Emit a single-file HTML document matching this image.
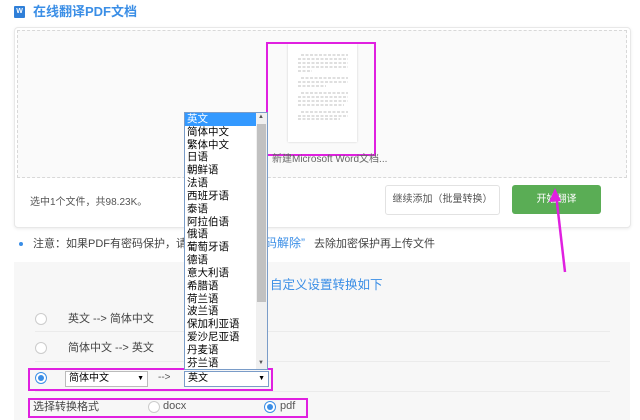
<!DOCTYPE html>
<html><head><meta charset="utf-8"><style>
*{margin:0;padding:0;box-sizing:border-box}
body{width:640px;height:420px;overflow:hidden;background:#fff;font-family:"Liberation Sans","Noto Sans CJK SC",sans-serif;position:relative;color:#333}
.a{position:absolute;white-space:nowrap}
.radio{position:absolute;width:12px;height:12px;border:1px solid #ccc;border-radius:50%;background:#fff}
.radio.on{border-color:#3a8ee6}
.radio.on::after{content:"";position:absolute;left:2px;top:2px;width:6px;height:6px;border-radius:50%;background:#3a8ee6}
.sel{position:absolute;height:16px;border:1px solid #bbb;background:#fff;font-size:10px;line-height:14px;padding-left:3px;color:#000}
.sel::after{content:"▼";position:absolute;right:3px;top:0;font-size:7px}
.mag{position:absolute;border:2px solid #e020e0}
.list div{height:12.84px;line-height:12.84px;font-size:10.5px;padding-left:2px;color:#000}
</style></head><body>
<div class="a" style="left:14px;top:6px;width:11px;height:12px;background:#2f7fd8;border-radius:1px;color:#fff;font-size:7px;font-weight:bold;text-align:center;line-height:12px">W</div>
<div class="a" style="left:33px;top:3px;font-size:13px;font-weight:bold;color:#3a8ee6;line-height:18px">在线翻译PDF文档</div>

<div class="a" style="left:14px;top:27px;width:617px;height:201px;border:1px solid #e8e8e8;border-radius:4px;background:#fff;box-shadow:0 1px 3px rgba(0,0,0,.08)"></div>
<div class="a" style="left:17px;top:30px;width:610px;height:148px;border:1px dashed #d8d8d8;background:#fafafa"></div>
<div class="a" style="left:288px;top:44px;width:69px;height:98px;background:#fff;box-shadow:0 0 2px #ccc"></div>
<svg class="a" style="left:298px;top:54px" width="52" height="66"><g stroke="#aaa" stroke-width="0.7" stroke-dasharray="3 1.5">
<line x1="3" y1="1" x2="50" y2="1"/><line x1="0" y1="5" x2="50" y2="5"/><line x1="0" y1="9" x2="50" y2="9"/><line x1="0" y1="13" x2="50" y2="13"/><line x1="0" y1="17" x2="14" y2="17"/>
<line x1="3" y1="24" x2="50" y2="24"/><line x1="0" y1="28" x2="50" y2="28"/><line x1="0" y1="32" x2="28" y2="32"/>
<line x1="3" y1="39" x2="50" y2="39"/><line x1="0" y1="43" x2="50" y2="43"/><line x1="0" y1="47" x2="50" y2="47"/><line x1="0" y1="51" x2="46" y2="51"/>
<line x1="3" y1="58" x2="50" y2="58"/><line x1="0" y1="62" x2="50" y2="62"/><line x1="0" y1="65" x2="42" y2="65"/></g></svg>
<div class="mag" style="left:266px;top:42px;width:110px;height:114px"></div>
<div class="a" style="left:272px;top:150px;font-size:10px;color:#666">新建Microsoft Word文档...</div>
<div class="a" style="left:30px;top:193px;font-size:10px;color:#555">选中1个文件，共98.23K。</div>
<div class="a" style="left:385px;top:185px;width:115px;height:30px;border:1px solid #e2e2e2;border-radius:3px;font-size:10px;line-height:28px;text-align:center;color:#555">继续添加（批量转换）</div>
<div class="a" style="left:512px;top:185px;width:89px;height:29px;background:#5aad55;border-radius:3px;font-size:10px;line-height:29px;text-align:center;color:#fff">开始翻译</div>

<div class="a" style="left:19px;top:242px;width:4px;height:4px;border-radius:50%;background:#3a8ee6"></div>
<div class="a" style="left:33px;top:237px;font-size:11px;line-height:14px;color:#444">注意：如果PDF有密码保护，请先</div>
<div class="a" style="left:265px;top:236px;font-size:12px;line-height:14px;color:#3a8ee6">码解除”</div>
<div class="a" style="left:314px;top:237px;font-size:11px;line-height:14px;color:#444">去除加密保护再上传文件</div>

<div class="a" style="left:14px;top:262px;width:616px;height:158px;background:#f7f7f7"></div>
<div class="a" style="left:270px;top:274px;font-size:12.5px;color:#3a8ee6">自定义设置转换如下</div>
<div class="a" style="left:35px;top:331px;width:575px;height:1px;background:#ebebeb"></div>
<div class="a" style="left:35px;top:361px;width:575px;height:1px;background:#ebebeb"></div>
<div class="a" style="left:35px;top:391px;width:575px;height:1px;background:#ebebeb"></div>
<div class="radio" style="left:35px;top:313px"></div>
<div class="a" style="left:68px;top:312px;font-size:11px;line-height:14px;color:#444">英文 --&gt; 简体中文</div>
<div class="radio" style="left:35px;top:342px"></div>
<div class="a" style="left:68px;top:341px;font-size:11px;line-height:14px;color:#444">简体中文 --&gt; 英文</div>
<div class="radio on" style="left:35px;top:372px"></div>
<div class="sel" style="left:65px;top:371px;width:83px">简体中文</div>
<div class="a" style="left:158px;top:372px;font-size:10px;color:#555">--&gt;</div>
<div class="sel" style="left:184px;top:371px;width:85px;border-color:#7a9cc8">英文</div>
<div class="mag" style="left:28px;top:368px;width:245px;height:23px"></div>
<div class="a" style="left:33px;top:400px;font-size:11px;line-height:14px;color:#444">选择转换格式</div>
<div class="radio" style="left:148px;top:401px"></div>
<div class="a" style="left:163px;top:399px;font-size:11px;line-height:14px;color:#555">docx</div>
<div class="radio on" style="left:264px;top:401px"></div>
<div class="a" style="left:280px;top:399px;font-size:11px;line-height:14px;color:#555">pdf</div>
<div class="mag" style="left:28px;top:398px;width:280px;height:20px"></div>

<div class="a list" style="left:184px;top:112px;width:84px;height:258px;background:#fff;border:1px solid #7a9cc8">
<div style="background:#3399ff;color:#fff;margin-right:11px">英文</div><div>简体中文</div><div>繁体中文</div><div>日语</div><div>朝鲜语</div><div>法语</div><div>西班牙语</div><div>泰语</div><div>阿拉伯语</div><div>俄语</div><div>葡萄牙语</div><div>德语</div><div>意大利语</div><div>希腊语</div><div>荷兰语</div><div>波兰语</div><div>保加利亚语</div><div>爱沙尼亚语</div><div>丹麦语</div><div>芬兰语</div>
</div>
<div class="a" style="left:256px;top:113px;width:11px;height:256px;background:#f0f0f0"></div>
<div class="a" style="left:257px;top:124px;width:9px;height:178px;background:#c1c1c1"></div>
<div class="a" style="left:258px;top:114px;font-size:6px;color:#555">▲</div>
<div class="a" style="left:258px;top:360px;font-size:6px;color:#555">▼</div>

<svg class="a" style="left:540px;top:180px" width="40" height="100"><path d="M25 92 L16 14" stroke="#e020e0" stroke-width="2.5" fill="none"/><path d="M15 8 L9 22 L21 21 Z" fill="#e020e0"/></svg>
</body></html>
